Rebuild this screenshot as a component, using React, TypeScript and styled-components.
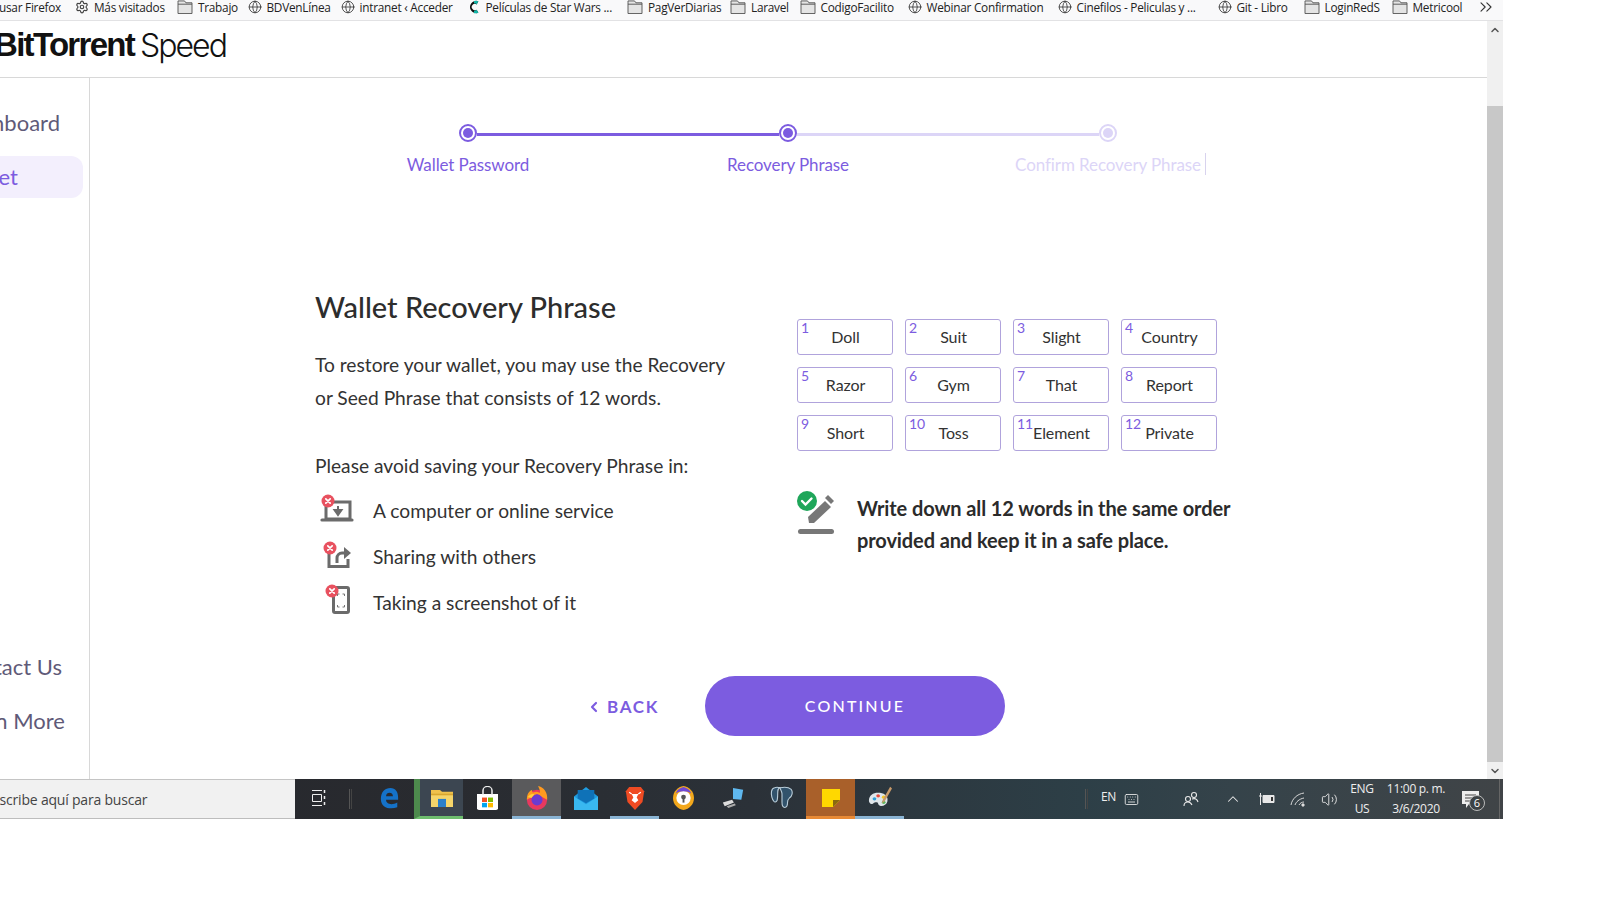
import React from "react";
import styled, { createGlobalStyle } from "styled-components";
import { Globe, Settings, ChevronUp, ChevronDown, ChevronsRight, ChevronLeft, ChevronUp as Caret, Volume2, Keyboard } from "lucide-react";

const Global = createGlobalStyle`
  html, body { margin: 0; padding: 0; background: #fff; overflow: hidden; }
  * { box-sizing: border-box; }
`;
const Screen = styled.div`
  width: 1503px; height: 819px; display: flex; flex-direction: column; overflow: hidden; background: #fff;
  font-family: Lato, "Open Sans", sans-serif; color: #333;
`;
const BookmarkBar = styled.div`
  height: 21px; flex: none; display: flex; align-items: flex-start; background: #f9f9fa; border-bottom: 1px solid #e2e2e4;
  font-family: "Open Sans", sans-serif; font-size: 11.8px; line-height: 14px; color: #222; white-space: nowrap;
`;
const Bookmark = styled.div<{ $w: number }>`
  display: flex; align-items: center; gap: 5px; flex: none; width: ${p => p.$w}px; margin-right: 12px;
  letter-spacing: -0.25px; height: 14px;
  svg { flex: none; }
`;
const FirstBookmark = styled(Bookmark)` margin-left: -1px; `;
const Chevrons = styled.div` display: flex; color: #333; margin-top: -3px; `;
const Middle = styled.div` flex: 1; display: flex; min-height: 0; `;
const Main = styled.div` flex: 1; display: flex; flex-direction: column; min-width: 0; `;
const Header = styled.header`
  height: 57px; flex: none; border-bottom: 1px solid #d8d8d8; display: flex; align-items: center; padding: 0 0 8px 0; overflow: hidden;
`;
const Logo = styled.div`
  font-family: "Liberation Sans", Arial, sans-serif; font-size: 33px; color: #111; white-space: nowrap; margin-left: -6px; letter-spacing: -1.7px; display: flex; gap: 6px;
`;
const LogoBold = styled.span` font-weight: 700; `;
const LogoLight = styled.span` font-family: Inter, "Liberation Sans", sans-serif; font-weight: 300; font-size: 32px; letter-spacing: -2px; `;
const Body = styled.div` flex: 1; display: flex; min-height: 0; `;
const Sidebar = styled.nav`
  width: 90px; flex: none; border-right: 1px solid #d8d8d8; display: flex; flex-direction: column; padding-top: 23px; overflow: hidden;
`;
const NavItem = styled.div<{ $active?: boolean; $end: number; $after?: number }>`
  width: 83px; height: 42px; flex: none; display: flex; align-items: center; justify-content: flex-end; padding-right: ${p => 83 - p.$end}px;
  padding-bottom: ${p => (p.$active ? 2 : 0)}px;
  font-size: 22px; white-space: nowrap; color: ${p => (p.$active ? "#7c5ce0" : "#5f5a78")};
  background: ${p => (p.$active ? "#f3effd" : "transparent")}; border-radius: 0 12px 12px 0;
  margin-bottom: ${p => p.$after ?? 12}px;
`;
const NavSpacer = styled.div` height: 435px; flex: none; `;
const Content = styled.main` flex: 1; display: flex; flex-direction: column; min-width: 0; `;
const Stepper = styled.div` display: flex; align-items: center; margin: 44px 0 0 369px; height: 24px; `;
const Dot = styled.span<{ $dim?: boolean }>`
  width: 18px; height: 18px; flex: none; border-radius: 50%; border: 2px solid ${p => (p.$dim ? "#dcd5f7" : "#7c5ce0")}; display: flex; align-items: center; justify-content: center; margin-top: -2px;
  &::after { content: ""; width: 10px; height: 10px; border-radius: 50%; background: ${p => (p.$dim ? "#dcd5f7" : "#7c5ce0")}; }
`;
const Line = styled.span<{ $dim?: boolean }>` width: 302px; height: 3px; background: ${p => (p.$dim ? "#dcd5f7" : "#7c5ce0")}; `;
const StepLabels = styled.div` display: grid; grid-template-columns: repeat(3, 320px); margin: 8px 0 0 218px; `;
const StepLabel = styled.div<{ $dim?: boolean }>`
  text-align: center; font-size: 17px; line-height: 22px; letter-spacing: -0.1px; color: ${p => (p.$dim ? "#dcd5f7" : "#7c5ce0")};
`;
const Caretted = styled.span`
  position: relative;
  &::after { content: ""; position: absolute; right: -5px; top: -1px; height: 22px; width: 1px; background: #d8d3ee; }
`;
const Columns = styled.div` display: flex; margin: 113px 0 0 225px; height: 387px; `;
const LeftCol = styled.section` width: 482px; flex: none; `;
const Title = styled.h1` margin: 0 0 23px; font-size: 29px; font-weight: 500; line-height: 36px; color: #2d2d2d; `;
const Para = styled.p` margin: 0 0 35px; font-size: 19.2px; line-height: 33px; color: #333; `;
const Lead = styled.p` margin: 0 0 5px; font-size: 19.2px; line-height: 33px; color: #333; `;
const Avoid = styled.div` display: flex; align-items: center; height: 46px; font-size: 19.2px; color: #333; `;
const AvoidIcon = styled.svg` width: 38px; height: 36px; margin: 0 16px 0 4px; flex: none; `;
const RightCol = styled.section` display: flex; flex-direction: column; padding-top: 30px; `;
const Words = styled.div` display: grid; grid-template-columns: repeat(4, 96px); grid-auto-rows: 36px; column-gap: 12px; row-gap: 12px; `;
const Word = styled.div`
  position: relative; border: 1px solid #b0a3dc; border-radius: 3px; display: flex; align-items: center; justify-content: center; font-size: 16px; color: #333; letter-spacing: -0.1px; padding: 0 0 2px 1px;
`;
const WordNum = styled.span`
  position: absolute; left: 3px; top: 0; font-size: 14px; line-height: 16px; color: #7c5ce0;
`;
const Note = styled.div` display: flex; margin-top: 42px; `;
const NoteIcon = styled.svg` width: 46px; height: 46px; flex: none; margin: -2px 17px 0 -3px; `;
const NoteText = styled.p` margin: 0; font-size: 20px; font-weight: 700; line-height: 31.5px; color: #2b2b2b; letter-spacing: -0.1px; width: 400px; `;
const Actions = styled.div` display: flex; align-items: center; margin: 0 0 0 496px; `;
const BackBtn = styled.button`
  border: 0; background: none; padding: 0; display: flex; align-items: center; gap: 5px; font: 700 17px Lato, sans-serif; letter-spacing: 1.7px; color: #7c5ce0; margin-right: 43px; width: 76px;
  svg { margin-top: 2px; flex: none; }
`;
const ContinueBtn = styled.button`
  width: 300px; height: 60px; border: 0; border-radius: 30px; background: #7c5ce0; color: #fff; font: 500 16px Lato, sans-serif; letter-spacing: 2.2px; padding: 0 0 2px;
`;
const Scrollbar = styled.div` width: 16px; flex: none; background: #f0f0f0; display: flex; flex-direction: column; align-items: center; justify-content: space-between; color: #555; `;
const ScrollArrow = styled.div` height: 17px; flex: none; display: flex; align-items: center; justify-content: center; `;
const Thumb = styled.div` flex: 1; width: 16px; background: #c8c8c8; margin-top: 68px; `;
const TaskBar = styled.footer`
  height: 40px; flex: none; display: flex; background: linear-gradient(90deg, #25262a 0%, #292b30 30%, #2b3138 50%, #2d3f47 72%, #35434a 82%, #404447 100%);
  color: #eee; font-family: "Open Sans", sans-serif;
`;
const SearchBox = styled.div`
  width: 295px; flex: none; background: #f1f1f1; border-top: 1px solid #c4c4c4; border-bottom: 1px solid #bdbdbd; display: flex; align-items: center; font-size: 14px; color: #444; letter-spacing: -0.2px; white-space: nowrap; overflow: hidden;
`;
const SearchText = styled.span` margin-left: -8px; `;
const TaskCell = styled.div<{ $bg?: string; $line?: string; $w?: number; $strip?: boolean }>`
  width: ${p => p.$w ?? 49}px; flex: none; height: 40px; display: flex; align-items: center; justify-content: center;
  background: ${p => p.$bg ?? "transparent"}; border-bottom: 3px solid ${p => p.$line ?? "transparent"}; padding-top: 1px;
  border-left: ${p => (p.$strip ? "6px solid #4d8a4d" : "0")};
`;
const TaskSep = styled.div` width: 3px; height: 20px; margin: 10px 13px 0 7px; border-left: 1px solid #555; border-right: 1px solid #444; flex: none; `;
const Tray = styled.div` flex: 1; display: flex; align-items: center; justify-content: flex-end; font-size: 12px; padding-right: 3px; `;
const TraySep = styled.div` width: 3px; height: 20px; border-left: 1px solid #555; border-right: 1px solid #444; margin-right: 13px; flex: none; `;
const TrayText = styled.span` font-size: 12px; margin: 0 8px 6px 0; letter-spacing: -0.3px; `;
const TrayIcon = styled.div<{ $m: number }>` display: flex; margin-right: ${p => p.$m}px; color: #e8e8e8; `;
const Clock = styled.div<{ $w: number; $m: number }>` width: ${p => p.$w}px; margin-right: ${p => p.$m}px; text-align: center; font-size: 12px; line-height: 20px; letter-spacing: -0.3px; white-space: nowrap; `;
const Notif = styled.div` position: relative; width: 38px; height: 40px; display: flex; align-items: center; justify-content: flex-start; border-right: 1px solid #666; `;
const NotifBadge = styled.span`
  position: absolute; left: 7px; top: 16px; width: 16px; height: 16px; border-radius: 50%; border: 1px solid #bbb; background: #3c4144; font-size: 11px; line-height: 14px; text-align: center; color: #fff;
`;

const Folder = () => (
  <svg width="16" height="14" viewBox="0 0 16 15"><path d="M.5 3V1h7l1.5 2h6.5v11.500H.5z" fill="#e4e4e4" stroke="#555" /><path d="M.5 4.500h15" stroke="#555" /></svg>
);
const G = () => <Globe size={14} strokeWidth={1.4} color="#333" />;
const CLogo = () => (
  <svg width="14" height="14" viewBox="0 0 14 16"><path d="M12 1.500A7 7 0 1 0 12 14.500L10 11A3.600 3.600 0 1 1 10 5z" fill="#111" /><path d="M12 1.500 10 5a3.600 3.600 0 0 0-3-1.200L7 1a7 7 0 0 1 5 .5zM12 14.500 10 11a3.600 3.600 0 0 1-3 1.200L7 15a7 7 0 0 0 5-.5z" fill="#12b5a6" /></svg>
);
const marks: [React.ReactNode, string, number][] = [
  [<Settings key="g" size={14} strokeWidth={2} color="#444" />, "Más visitados", 90],
  [<Folder key="a" />, "Trabajo", 58.5],
  [<G key="b" />, "BDVenLínea", 81],
  [<G key="c" />, "intranet ‹ Acceder", 114],
  [<CLogo key="d" />, "Películas de Star Wars ...", 148.5],
  [<Folder key="e" />, "PagVerDiarias", 91],
  [<Folder key="f" />, "Laravel", 57.5],
  [<Folder key="h" />, "CodigoFacilito", 96],
  [<G key="i" />, "Webinar Confirmation", 138],
  [<G key="j" />, "Cinefilos - Peliculas y ...", 148],
  [<G key="k" />, "Git - Libro", 74],
  [<Folder key="l" />, "LoginRedS", 76],
  [<Folder key="m" />, "Metricool", 72],
];
const words = ["Doll", "Suit", "Slight", "Country", "Razor", "Gym", "That", "Report", "Short", "Toss", "Element", "Private"];

const XBadge = ({ x, y }: { x: number; y: number }) => (
  <g>
    <circle cx={x} cy={y} r="6.5" fill="#e8515f" />
    <path d={`M${x - 2.2} ${y - 2.2}l4.400 4.400M${x + 2.2} ${y - 2.2}l-4.400 4.400`} stroke="#fff" strokeWidth="1.7" strokeLinecap="round" />
  </g>
);
const Tile = ({ children, ...p }: any) => <TaskCell {...p}>{children}</TaskCell>;

export default function App() {
  return (
    <>
      <Global />
      <Screen>
        <BookmarkBar>
          <FirstBookmark $w={64}>usar Firefox</FirstBookmark>
          {marks.map(([icon, label, w]) => (
            <Bookmark key={label} $w={w}>{icon}{label}</Bookmark>
          ))}
          <Chevrons><ChevronsRight size={20} strokeWidth={1.3} /></Chevrons>
        </BookmarkBar>
        <Middle>
          <Main>
            <Header>
              <Logo><LogoBold>BitTorrent</LogoBold><LogoLight>Speed</LogoLight></Logo>
            </Header>
            <Body>
              <Sidebar>
                <NavItem $end={60} $after={13}>Dashboard</NavItem>
                <NavItem $active $end={18}>Wallet</NavItem>
                <NavSpacer />
                <NavItem $end={62}>Contact Us</NavItem>
                <NavItem $end={65}>Learn More</NavItem>
              </Sidebar>
              <Content>
                <Stepper>
                  <Dot /><Line /><Dot /><Line $dim /><Dot $dim />
                </Stepper>
                <StepLabels>
                  <StepLabel>Wallet Password</StepLabel>
                  <StepLabel>Recovery Phrase</StepLabel>
                  <StepLabel $dim><Caretted>Confirm Recovery Phrase</Caretted></StepLabel>
                </StepLabels>
                <Columns>
                  <LeftCol>
                    <Title>Wallet Recovery Phrase</Title>
                    <Para>To restore your wallet, you may use the Recovery<br />or Seed Phrase that consists of 12 words.</Para>
                    <Lead>Please avoid saving your Recovery Phrase in:</Lead>
                    <Avoid>
                      <AvoidIcon viewBox="0 0 38 36">
                        <path d="M7 10h24v17H7z" fill="none" stroke="#6b6b6b" strokeWidth="3" />
                        <path d="M3 28h30" stroke="#6b6b6b" strokeWidth="3.2" strokeLinecap="round" />
                        <path d="M19 14v5M15.500 18h7L19 23z" stroke="#6b6b6b" strokeWidth="2" fill="#6b6b6b" />
                        <XBadge x={9} y={9} />
                      </AvoidIcon>
                      A computer or online service
                    </Avoid>
                    <Avoid>
                      <AvoidIcon viewBox="0 0 38 36">
                        <path d="M10 12v16.500h19V21" fill="none" stroke="#6b6b6b" strokeWidth="3" />
                        <path d="M18 25v-5a5 5 0 0 1 5-5h3" fill="none" stroke="#6b6b6b" strokeWidth="3" />
                        <path d="M25 9l7 6-7 6z" fill="#6b6b6b" />
                        <XBadge x={11} y={10} />
                      </AvoidIcon>
                      Sharing with others
                    </Avoid>
                    <Avoid>
                      <AvoidIcon viewBox="0 0 38 36">
                        <rect x="14.500" y="3.500" width="15" height="25" rx="1.5" fill="none" stroke="#6b6b6b" strokeWidth="3" />
                        <path d="M18.500 12v-2h2M25.500 12v-2h-2M18.500 21v2h2M25.500 21v2h-2" fill="none" stroke="#777" strokeWidth="1" />
                        <XBadge x={13} y={7} />
                      </AvoidIcon>
                      Taking a screenshot of it
                    </Avoid>
                  </LeftCol>
                  <RightCol>
                    <Words>
                      {words.map((w, i) => (
                        <Word key={w}><WordNum>{i + 1}</WordNum>{w}</Word>
                      ))}
                    </Words>
                    <Note>
                      <NoteIcon viewBox="0 0 46 46">
                        <path d="M15 32l-1-6 17-16 6 6-17 16z" fill="#777" />
                        <path d="M31 7l3-3 6 6-3 3z" fill="#777" />
                        <rect x="4" y="38" width="36" height="5" rx="2.5" fill="#777" />
                        <circle cx="13" cy="10" r="10" fill="#1fa65a" />
                        <path d="M8 10l3.500 3.500 6-6" fill="none" stroke="#fff" strokeWidth="2.4" strokeLinecap="round" />
                      </NoteIcon>
                      <NoteText>Write down all 12 words in the same order provided and keep it in a safe place.</NoteText>
                    </Note>
                  </RightCol>
                </Columns>
                <Actions>
                  <BackBtn><ChevronLeft size={16} strokeWidth={3.2} />BACK</BackBtn>
                  <ContinueBtn>CONTINUE</ContinueBtn>
                </Actions>
              </Content>
            </Body>
          </Main>
          <Scrollbar>
            <ScrollArrow><ChevronUp size={12} strokeWidth={3} /></ScrollArrow>
            <Thumb />
            <ScrollArrow><ChevronDown size={12} strokeWidth={3} /></ScrollArrow>
          </Scrollbar>
        </Middle>
        <TaskBar>
          <SearchBox><SearchText>Escribe aquí para buscar</SearchText></SearchBox>
          <Tile $w={47}>
            <svg width="16" height="18" viewBox="0 0 16 18" fill="none" stroke="#eee"><path d="M1 1.500h10M1 16.500h10M1.500 5.500h9v7h-9z" /><path d="M13.500 1v3M13.500 7v3M13.500 13v3" strokeWidth="1.5" /></svg>
          </Tile>
          <TaskSep />
          <Tile>
            <svg width="19" height="22" viewBox="0 0 22 24" preserveAspectRatio="none"><path d="M1 13C1 5 6 1 12 1c6 0 9 4 9 11v2H7c0 5 7 6 13 3v5c-8 3-19 1-19-9zM7 10h8c0-5-8-5-8 0z" fill="#1572c8" /></svg>
          </Tile>
          <Tile $bg="#3c4651" $line="#6ebd6e" $strip>
            <svg width="22" height="18" viewBox="0 0 22 20" preserveAspectRatio="none"><path d="M0 1h9l2 2h11v4H0z" fill="#f0c14b" /><path d="M0 5h22v15H0z" fill="#f5d56a" /><path d="M7 11h8v9H7z" fill="#2a7fc9" /><path d="M0 5h22v2H0z" fill="#d9a62e" /></svg>
          </Tile>
          <Tile>
            <svg width="23" height="24" viewBox="0 0 23 27" preserveAspectRatio="none"><path d="M1 9h21v16a2 2 0 0 1-2 2H3a2 2 0 0 1-2-2z" fill="#fff" /><path d="M7 10V5a4.500 4.500 0 0 1 9 0v5" fill="none" stroke="#eee" strokeWidth="1.5" /><path d="M6 13h5v5H6z" fill="#f25022" /><path d="M12 13h5v5h-5z" fill="#7fba00" /><path d="M6 19h5v5H6z" fill="#00a4ef" /><path d="M12 19h5v5h-5z" fill="#ffb900" /></svg>
          </Tile>
          <Tile $bg="#5a5a5c" $line="#8ab4d4">
            <svg width="24" height="24" viewBox="0 0 26 26"><circle cx="13" cy="15" r="11" fill="#e8395f" /><path d="M2 15C2 8 5 5 8 4c-1 2 0 3 1 3 2-1 5-1 6 0 3 2 0-6-1-7 6 1 11 7 10 15L13 9z" fill="#ff9a1f" /><circle cx="13" cy="15" r="6" fill="#6a3bd0" /><path d="M3 12c2-3 5-4 7-3l-3 4z" fill="#ffcf3b" /></svg>
          </Tile>
          <Tile>
            <svg width="24" height="23" viewBox="0 0 26 24" preserveAspectRatio="none"><path d="M0 10 13 0l13 10v14H0z" fill="#1e9be0" /><path d="M0 10l13 8 13-8v14H0z" fill="#39b8f0" /><path d="M4 3h18v9l-9 5-9-5z" fill="#0f72b8" /></svg>
          </Tile>
          <Tile $line="#8ab4d4">
            <svg width="20" height="24" viewBox="0 0 24 27" preserveAspectRatio="none"><path d="M5 1h14l4 5-2 12-9 9-9-9L1 6z" fill="#ef4b23" /><path d="M8 9h8l-2 4 2 3-4 3-4-3 2-3z" fill="#fff" /><path d="M5 7l3 2M19 7l-3 2" stroke="#fff" strokeWidth="1.5" /></svg>
          </Tile>
          <Tile>
            <svg width="21" height="24" viewBox="0 0 22 26" preserveAspectRatio="none"><path d="M11 0C5 1 0 6 0 13s5 12 11 13c6-1 11-6 11-13S17 1 11 0z" fill="#f3a81c" /><circle cx="11" cy="13" r="7.500" fill="#fff" /><path d="M11 1C7 2 4 4 3 8c4-3 12-3 16 0-1-4-4-6-8-7z" fill="#6f49d6" /><circle cx="11" cy="12" r="2.500" fill="#555" /><path d="M10 13h2v5h-2z" fill="#555" /></svg>
          </Tile>
          <Tile>
            <svg width="24" height="20" viewBox="0 0 26 22" preserveAspectRatio="none"><path d="M13 0l11 2-2 11-9-1z" fill="#5fb8ef" /><path d="M2 16l10-3 2 3-10 4z" fill="#ddd" /><path d="M6 20l9-3 1 2-8 3z" fill="#aaa" /></svg>
          </Tile>
          <Tile>
            <svg width="24" height="24" viewBox="0 0 26 28" fill="#32536c" stroke="#b9cdd9" strokeWidth="1.2" preserveAspectRatio="none"><path d="M5 2c-4 1-4 7-3 11s3 7 5 5c1-1 1-3 1-3 1-7-1-12 3-13 1 0-4-1-6 0z" /><path d="M11 2c4-1 9-1 12 2 2 3 1 8-2 10-1 1-2 3-2 5 0 3-1 6-3 6-2 0-3-2-3-6V9c0-3-3-7-2-7z" /></svg>
          </Tile>
          <Tile $bg="#a9602a" $line="#e88a35">
            <svg width="18" height="18" viewBox="0 0 18 18"><path d="M0 0h18v11l-7 7H0z" fill="#ffd800" /><path d="M11 18v-7h7z" fill="#8a6a10" /></svg>
          </Tile>
          <Tile $line="#8ab4d4">
            <svg width="24" height="24" viewBox="0 0 26 28" preserveAspectRatio="none"><path d="M1 17C1 10 7 7 13 8c6 1 9 5 8 10-1 4-5 6-8 5-3-1-1-4-4-4-3 0-3 2-5 2s-3-2-3-4z" fill="#dfe6ea" /><circle cx="7" cy="15" r="2" fill="#2f9fd8" /><circle cx="11" cy="11.500" r="2" fill="#e64b3b" /><circle cx="17" cy="13" r="2" fill="#f3c623" /><circle cx="17" cy="19" r="2" fill="#5cb85c" /><path d="M24 1l2 2-8 15-3 2 1-4z" fill="#c89a6a" /></svg>
          </Tile>
          <Tray>
            <TraySep />
            <TrayText>EN</TrayText>
            <TrayIcon $m={44}><Keyboard size={15} strokeWidth={1.4} /></TrayIcon>
            <TrayIcon $m={25}>
              <svg width="16" height="16" viewBox="0 0 16 16" fill="none" stroke="#e8e8e8" strokeWidth="1.1"><circle cx="5" cy="8" r="2.500" /><path d="M1 15c0-3 2-4 4-4s3 1 4 3" /><circle cx="11" cy="4" r="2.500" /><path d="M9 8c3-1 5 0 6 3" /></svg>
            </TrayIcon>
            <TrayIcon $m={17}><Caret size={18} strokeWidth={1.4} /></TrayIcon>
            <TrayIcon $m={15}>
              <svg width="16" height="12" viewBox="0 0 16 12"><path d="M4 2.500h11v7H4z" fill="#e8e8e8" stroke="#e8e8e8" /><path d="M0 3h3M1.500 0v5M1.500 5v7" stroke="#e8e8e8" /><path d="M12 4h2v4h-2z" fill="#333" /></svg>
            </TrayIcon>
            <TrayIcon $m={15}>
              <svg width="16" height="16" viewBox="0 0 16 16" fill="none" stroke="#d8d8d8" strokeWidth="1"><path d="M1 14C2 8 7 3 14 2M5 14c1-3 4-6 9-7M9 14c1-2 3-3 5-3" /><circle cx="13" cy="14" r="1.2" fill="#eee" /></svg>
            </TrayIcon>
            <TrayIcon $m={9}><Volume2 size={17} strokeWidth={1.3} /></TrayIcon>
            <Clock $w={30} $m={4}>ENG<br />US</Clock>
            <Clock $w={70} $m={11}>11:00 p. m.<br />3/6/2020</Clock>
            <Notif>
              <svg width="17" height="17" viewBox="0 0 17 17"><path d="M0 0h17v13H7l-3 4v-4H0z" fill="#eee" /><path d="M3 4h11M3 7h11M3 10h7" stroke="#444" /></svg>
              <NotifBadge>6</NotifBadge>
            </Notif>
          </Tray>
        </TaskBar>
      </Screen>
    </>
  );
}
